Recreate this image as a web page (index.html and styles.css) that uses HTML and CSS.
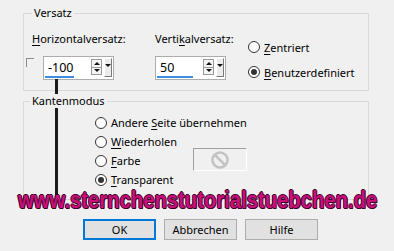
FILE: index.html
```html
<!DOCTYPE html>
<html lang="de">
<head>
    <meta charset="UTF-8">
    <title>Versatz</title>
    <link rel="stylesheet" href="styles.css">
</head>
<body>
    <div class="dialog">
        <fieldset class="group versatz">
            <legend>Versatz</legend>
            <div class="offset-col first">
                <div class="label"><u>H</u>orizontalversatz:</div>
                <div class="field-row">
                    <span class="check"></span>
                    <div class="spin">
                        <span class="spin-value">-100</span>
                        <span class="spin-bar" style="width: 29px"></span>
                        <span class="spin-arrows"><i class="arrow up"></i><i class="arrow down"></i></span>
                        <span class="spin-drop"></span>
                    </div>
                </div>
            </div>
            <div class="offset-col second">
                <div class="label">Verti<u>k</u>alversatz:</div>
                <div class="field-row">
                    <div class="spin">
                        <span class="spin-value">50</span>
                        <span class="spin-bar" style="width: 36px"></span>
                        <span class="spin-arrows"><i class="arrow up"></i><i class="arrow down"></i></span>
                        <span class="spin-drop"></span>
                    </div>
                </div>
            </div>
            <div class="offset-col radios">
                <label class="radio"><span class="dot"></span><span><u>Z</u>entriert</span></label>
                <label class="radio checked"><span class="dot"></span><span><u>B</u>enutzerdefiniert</span></label>
            </div>
        </fieldset>

        <fieldset class="group kanten">
            <legend>Kantenmodus</legend>
            <div class="options">
                <label class="radio"><span class="dot"></span><span>Andere <u>S</u>eite übernehmen</span></label>
                <label class="radio"><span class="dot"></span><span><u>W</u>iederholen</span></label>
                <div class="option-row">
                    <label class="radio wide"><span class="dot"></span><span><u>F</u>arbe</span></label>
                    <span class="swatch">
                        <svg width="20" height="20" viewBox="0 0 20 20">
                            <circle cx="10" cy="10" r="7.5" fill="none" stroke="#c3c3c3" stroke-width="2.6"/>
                            <line x1="5" y1="5" x2="15" y2="15" stroke="#c3c3c3" stroke-width="2.6"/>
                        </svg>
                    </span>
                </div>
                <label class="radio checked"><span class="dot"></span><span><u>T</u>ransparent</span></label>
            </div>
        </fieldset>

        <div class="buttons">
            <button class="btn default">OK</button>
            <button class="btn">Abbrechen</button>
            <button class="btn">Hilfe</button>
        </div>

        <div class="pointer"></div>
        <div class="watermark">www.sternchenstutorialstuebchen.de</div>
    </div>
</body>
</html>
```

FILE: styles.css
```css
body, html {
    margin: 0;
    padding: 0;
    background: #f0f0f0;
}
.dialog {
    position: relative;
    width: 394px;
    height: 251px;
    overflow: hidden;
    font-family: "Noto Sans", "Open Sans", sans-serif;
    font-size: 11px;
    color: #000;
}
u {
    text-decoration-thickness: 1px;
    text-underline-offset: 2px;
}
.group {
    margin: 0 0 0 23px;
    width: 346px;
    box-sizing: border-box;
    border: 1px solid #d9d9d9;
    padding: 0;
    min-width: 0;
}
.group legend {
    position: relative;
    z-index: 2;
    margin-left: 6px;
    padding: 0 2px;
    line-height: 14px;
    background: #f0f0f0;
}
.versatz {
    margin-top: 6px;
    display: flex;
    padding: 11px 0 10px 2px;
}
.offset-col {
    display: flex;
    flex-direction: column;
}
.offset-col.first {
    width: 129px;
}
.offset-col.second {
    width: 93px;
}
.label {
    line-height: 15px;
    height: 15px;
    margin-bottom: 10px;
}
.first .label {
    margin-left: 6px;
}
.field-row {
    display: flex;
    align-items: flex-start;
}
.check {
    width: 7px;
    height: 8px;
    margin-top: 2px;
    margin-right: 9px;
    border-top: 1px solid #8c8c8c;
    border-left: 1px solid #8c8c8c;
}
.spin {
    position: relative;
    display: flex;
    align-items: center;
    width: 71px;
    height: 24px;
    box-sizing: border-box;
    border: 1px solid #acacac;
    background: #fff;
    padding-left: 4px;
}
.spin-value {
    flex: 1;
    font-size: 12.5px;
    line-height: 16px;
}
.spin-bar {
    position: absolute;
    left: 1px;
    bottom: 1px;
    height: 2px;
    background: #3c8fe0;
}
.spin-arrows {
    display: flex;
    flex-direction: column;
    width: 9px;
    height: 14px;
    border: 1px solid #9a9a9a;
    background: #f4f4f4;
    margin-right: 2px;
    margin-top: -2px;
}
.arrow {
    flex: 1;
    display: flex;
    align-items: center;
    justify-content: center;
}
.arrow.up {
    border-bottom: 1px solid #9a9a9a;
}
.arrow::before {
    content: "";
    border-left: 3px solid transparent;
    border-right: 3px solid transparent;
}
.arrow.up::before {
    border-bottom: 3px solid #111;
}
.arrow.down::before {
    border-top: 3px solid #111;
}
.spin-drop {
    display: flex;
    justify-content: center;
    align-self: stretch;
    width: 8px;
    margin: 1px 1px 2px 0;
    border: 1px solid;
    border-color: #fff #7a7a7a #7a7a7a #fff;
    background: #ececec;
    padding-top: 5px;
    box-sizing: border-box;
}
.spin-drop::before {
    content: "";
    height: 0;
    border-left: 3px solid transparent;
    border-right: 3px solid transparent;
    border-top: 3px solid #111;
}
.radios {
    padding-top: 10px;
    gap: 13px;
}
.radio {
    display: flex;
    align-items: center;
    height: 12px;
    line-height: 15px;
}
.dot {
    width: 12px;
    height: 12px;
    box-sizing: border-box;
    border: 1px solid #333;
    border-radius: 50%;
    background: #fff;
    margin-right: 4px;
    display: flex;
    align-items: center;
    justify-content: center;
}
.radio.checked .dot::before {
    content: "";
    width: 6px;
    height: 6px;
    border-radius: 50%;
    background: #333;
}
.kanten {
    margin-top: 3px;
    height: 106px;
}
.options {
    display: flex;
    flex-direction: column;
    padding: 5px 0 0 71px;
}
.options .radio {
    height: 19px;
}
.option-row {
    display: flex;
    align-items: center;
    height: 19px;
}
.radio.wide {
    width: 98px;
}
.swatch {
    display: flex;
    align-items: center;
    justify-content: center;
    width: 54px;
    height: 23px;
    box-sizing: border-box;
    margin-top: -2px;
    border: 1px solid;
    border-color: #a0a0a0 #fff #fff #a0a0a0;
}
.buttons {
    display: flex;
    gap: 8px;
    padding: 19px 0 0 83px;
}
.btn {
    width: 73px;
    height: 21px;
    border: 1px solid #adadad;
    background: #e1e1e1;
    font: inherit;
    color: #000;
    padding: 0;
}
.btn.default {
    border: 2px solid #0078d7;
}
.pointer {
    position: absolute;
    z-index: 1;
    left: 55px;
    top: 79px;
    width: 3px;
    height: 122px;
    background: #1c1c1c;
}
.watermark {
    position: absolute;
    left: 18px;
    top: 187px;
    z-index: 3;
    font-family: "Liberation Sans", Arial, sans-serif;
    font-weight: bold;
    font-size: 23px;
    line-height: 26px;
    white-space: nowrap;
    color: #c8107a;
    transform: scaleX(0.88);
    transform-origin: left top;
    text-shadow: 1px 1px 0 #40002a, -1px 0 0 #40002a, 0 -1px 0 #40002a, 1px 0 0 #40002a, 0 1px 0 #40002a;
}
```
